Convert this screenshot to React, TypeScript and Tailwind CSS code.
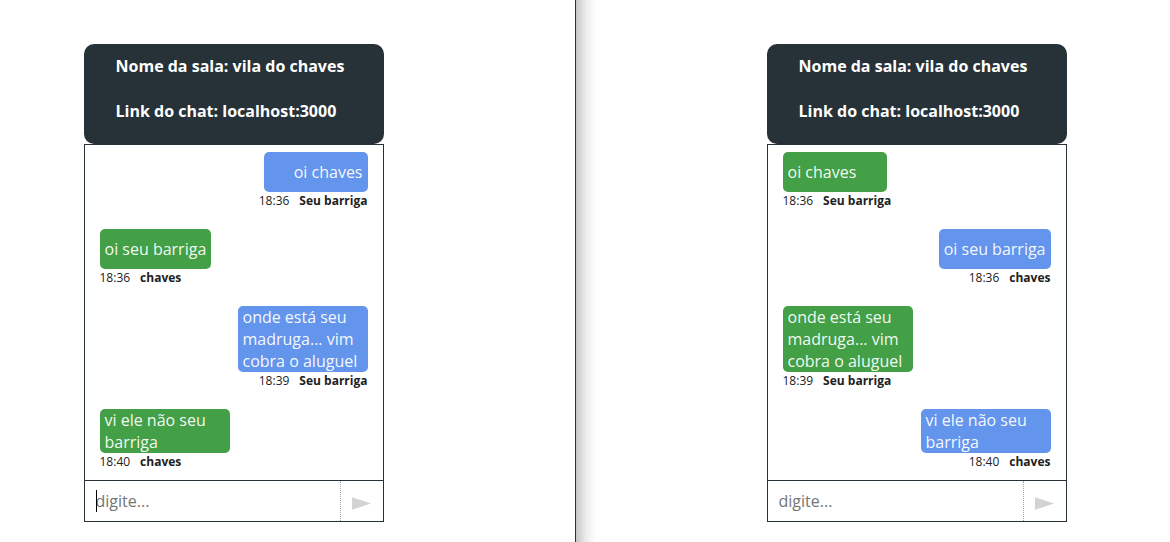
type Message = { text: string; time: string; author: string };

const messages: Message[] = [
  { text: "oi chaves", time: "18:36", author: "Seu barriga" },
  { text: "oi seu barriga", time: "18:36", author: "chaves" },
  { text: "onde está seu madruga... vim cobra o aluguel", time: "18:39", author: "Seu barriga" },
  { text: "vi ele não seu barriga", time: "18:40", author: "chaves" },
];

function Bubble({ message, own }: { message: Message; own: boolean }) {
  return (
    <li className={`flex flex-col ${own ? "items-end" : "items-start"}`}>
      <div
        className={`flex min-h-10 min-w-[104px] max-w-[130px] items-center rounded-[5px] px-[5px] text-base leading-[22px] text-white/95 ${
          own ? "justify-end bg-[#6495ed]" : "justify-start bg-[#43a047]"
        }`}
      >
        <p>{message.text}</p>
      </div>
      <p className="flex gap-[10px] text-xs leading-[17px] text-[#212121]">
        <time>{message.time}</time>
        <strong className="font-bold">{message.author}</strong>
      </p>
    </li>
  );
}

function Chat({ user, focused = false }: { user: string; focused?: boolean }) {
  return (
    <section className="w-[300px] max-w-full">
      <header className="flex flex-col gap-[23px] rounded-[10px] bg-[#263238] px-8 pt-[11px] pb-[22px] text-base leading-[22px] font-bold text-white">
        <h1>Nome da sala: vila do chaves</h1>
        <h2>Link do chat: localhost:3000</h2>
      </header>
      <div className="border border-[#263238]">
        <ul className="flex flex-col gap-5 px-[15px] pt-[7px] pb-[10px]">
          {messages.map((m) => (
            <Bubble key={m.time + m.author} message={m} own={m.author === user} />
          ))}
        </ul>
        <form className="flex h-[41px] border-t border-[#263238]" onSubmit={(e) => e.preventDefault()}>
          <div className="relative flex min-w-0 flex-1">
            <input
              type="text"
              aria-label="Mensagem"
              placeholder="digite..."
              className="w-full min-w-0 px-[11px] text-base text-[#212121] outline-none placeholder:text-[#757575]"
            />
            {focused && <span className="absolute top-[9px] left-[11px] h-[22px] w-px bg-black" />}
          </div>
          <button
            type="submit"
            aria-label="Enviar"
            className="flex w-[43px] items-center border-l border-dotted border-[#a0a6aa] pt-1 pl-[11px]"
          >
            <svg width="19" height="13" viewBox="0 0 19 13" fill="#d3d3d3" aria-hidden="true">
              <path d="M0 0.2L19 6.5L0 12.8Z" />
            </svg>
          </button>
        </form>
      </div>
    </section>
  );
}

export default function App() {
  return (
    <main className="grid min-h-screen grid-cols-[576fr_594fr] bg-white font-['Open_Sans',sans-serif]">
      <div className="flex items-start justify-center border-r border-[#263238] pt-11 pr-[108px]">
        <Chat user="Seu barriga" focused />
      </div>
      <div className="flex">
        <div className="w-[20px] shrink-0 bg-linear-to-r from-[#c6c6c6] via-[#ececec] to-white" />
        <div className="flex min-w-0 flex-1 items-start justify-center pt-11 pl-[67px]">
          <Chat user="chaves" />
        </div>
      </div>
    </main>
  );
}
